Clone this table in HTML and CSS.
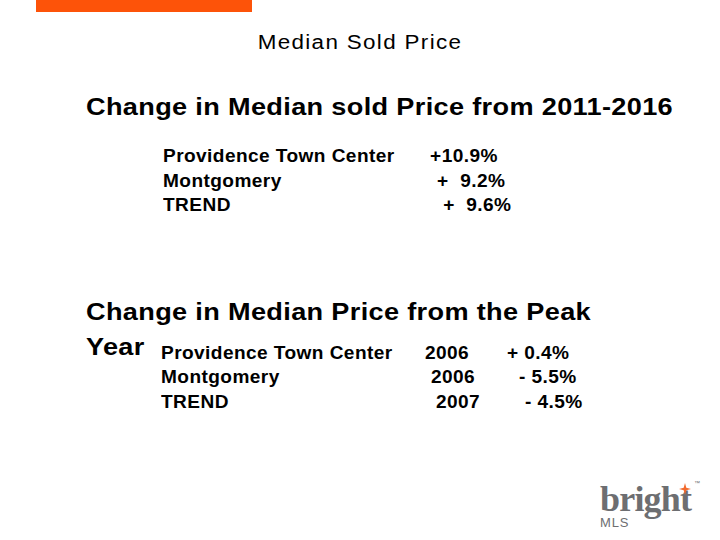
FILE: index.html
```html
<!DOCTYPE html>
<html>
<head>
<meta charset="utf-8">
<link rel="stylesheet" href="styles.css">
</head>
<body>
<div class="slide">
  <div class="bar"></div>
  <h1 class="title">Median Sold Price</h1>

  <section class="sec sec1">
    <h2 class="head">Change in Median sold Price from 2011-2016</h2>
    <div class="tbl t1">
      <div class="name">Providence Town Center</div><div class="val">+10.9%</div>
      <div class="name">Montgomery</div><div class="val i1">+&nbsp; 9.2%</div>
      <div class="name">TREND</div><div class="val i2">+&nbsp; 9.6%</div>
    </div>
  </section>

  <section class="sec sec2">
    <h2 class="head">Change in Median Price from the Peak</h2>
    <div class="yearrow">
      <span class="head year">Year</span>
      <div class="tbl t2">
        <div class="name">Providence Town Center</div><div class="yr">2006</div><div class="pct">+ 0.4%</div>
        <div class="name">Montgomery</div><div class="yr y1">2006</div><div class="pct p1">- 5.5%</div>
        <div class="name">TREND</div><div class="yr y2">2007</div><div class="pct p2">- 4.5%</div>
      </div>
    </div>
  </section>

  <div class="logo">
    <div class="brand">brigh<span class="tletter">t<svg class="star" viewBox="0 0 12 12" width="12" height="12"><path d="M6 0 L7.3 4.7 L12 6 L7.3 7.3 L6 12 L4.7 7.3 L0 6 L4.7 4.7 Z" fill="#f26a2e"/></svg></span><span class="tm">™</span></div>
    <div class="mls">MLS</div>
  </div>
</div>
</body>
</html>
```

FILE: styles.css
```css
* { box-sizing: border-box; }
html, body { margin: 0; padding: 0; background: #ffffff; }
body { font-family: "Liberation Sans", Arial, sans-serif; color: #000; }

.slide {
  width: 720px;
  height: 540px;
  display: flex;
  flex-direction: column;
  background: #fff;
  overflow: hidden;
}

.bar {
  margin-left: 36px;
  width: 216px;
  height: 12px;
  background: #fd5309;
  flex: none;
}

.title {
  margin: 18px 0 0 0;
  font-size: 20px;
  font-weight: normal;
  line-height: 24px;
  letter-spacing: 1.2px;
  text-align: center;
  transform: scaleX(1.12);
  transform-origin: 360px center;
}

.sec { margin-left: 86px; }
.sec1 { margin-top: 39px; }
.sec2 { margin-top: 80px; }

.head {
  margin: 0;
  font-size: 24px;
  font-weight: bold;
  line-height: 28px;
  letter-spacing: 0.3px;
  white-space: nowrap;
  transform: scaleX(1.13);
  transform-origin: left center;
}

.tbl {
  display: grid;
  font-size: 18px;
  font-weight: bold;
  line-height: 24.5px;
  letter-spacing: 0.4px;
  white-space: nowrap;
  transform: scaleX(1.06);
  transform-origin: left center;
}

.t1 {
  grid-template-columns: 252px auto;
  margin: 23px 0 0 77px;
}
.i1 { padding-left: 6.6px; }
.i2 { padding-left: 12.3px; }

.yearrow {
  display: flex;
  align-items: flex-start;
  margin-top: 7px;
}
.year { width: 75px; flex: none; }

.t2 {
  grid-template-columns: 249px 77.4px auto;
  margin-top: 8px;
}
.y1 { padding-left: 5.7px; }
.y2 { padding-left: 10.4px; }
.p1 { padding-left: 11.3px; }
.p2 { padding-left: 17px; }

.logo {
  margin-top: auto;
  margin-left: 600px;
  margin-bottom: 10px;
  width: 110px;
  color: #6d6e71;
}
.brand {
  position: relative;
  font-family: "Liberation Serif", "Times New Roman", serif;
  font-weight: bold;
  font-size: 36px;
  line-height: 32px;
  letter-spacing: -0.8px;
  height: 32px;
}
.tletter { position: relative; }
.star {
  position: absolute;
  left: -1px;
  top: 4px;
}
.tm {
  position: absolute;
  left: 94px;
  top: -4px;
  font-family: "Liberation Sans", Arial, sans-serif;
  font-size: 6px;
  font-weight: normal;
  line-height: 8px;
  letter-spacing: 0;
}
.mls {
  font-family: "Liberation Sans", Arial, sans-serif;
  font-size: 13px;
  line-height: 14px;
  letter-spacing: 0.8px;
  color: #6d6e71;
  margin-top: 1px;
}
```
